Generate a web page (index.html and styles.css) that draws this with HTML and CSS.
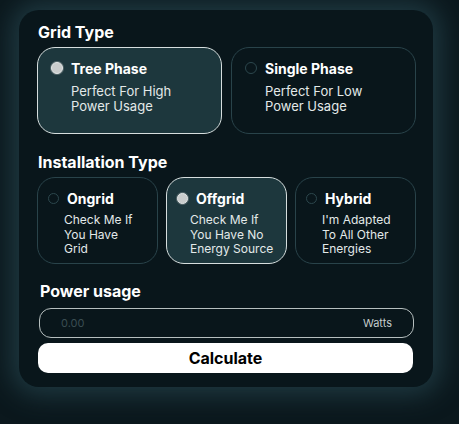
FILE: index.html
```html
<!DOCTYPE html>
<html>
<head>
<meta charset="utf-8">
<link rel="stylesheet" href="styles.css">
</head>
<body>
<div class="card">
  <h2 class="label">Grid Type</h2>
  <div class="grid-options">
    <div class="option big selected">
      <span class="radio"></span>
      <div class="text">
        <div class="title">Tree Phase</div>
        <div class="desc">Perfect For High<br>Power Usage</div>
      </div>
    </div>
    <div class="option big">
      <span class="radio"></span>
      <div class="text">
        <div class="title">Single Phase</div>
        <div class="desc">Perfect For Low<br>Power Usage</div>
      </div>
    </div>
  </div>

  <h2 class="label label-install">Installation Type</h2>
  <div class="install-options">
    <div class="option small">
      <div class="head"><span class="radio"></span><span class="title">Ongrid</span></div>
      <div class="desc">Check Me If<br>You Have<br>Grid</div>
    </div>
    <div class="option small selected">
      <div class="head"><span class="radio"></span><span class="title">Offgrid</span></div>
      <div class="desc">Check Me If<br>You Have No<br>Energy Source</div>
    </div>
    <div class="option small">
      <div class="head"><span class="radio"></span><span class="title">Hybrid</span></div>
      <div class="desc">I'm Adapted<br>To All Other<br>Energies</div>
    </div>
  </div>

  <h2 class="label label-power">Power usage</h2>
  <div class="input">
    <span class="placeholder">0.00</span>
    <span class="unit">Watts</span>
  </div>
  <button class="calc">Calculate</button>
</div>
</body>
</html>
```

FILE: styles.css
```css
* { box-sizing: border-box; }
html, body { margin: 0; padding: 0; }
body {
  width: 459px;
  height: 424px;
  background: #0b181d;
  font-family: Inter, "Noto Sans", sans-serif;
  color: #fff;
  overflow: hidden;
  padding: 10px 0 0 19px;
}
.card {
  width: 414px;
  height: 377px;
  background: #09161b;
  border-radius: 20px;
  box-shadow: 0 0 26px 8px rgba(38, 68, 77, 0.75);
  padding: 12px 17px 0 18px;
}
.label {
  margin: 0;
  font-size: 16px;
  font-weight: 700;
  line-height: 20px;
  color: #fff;
  padding-left: 1px;
}
.grid-options {
  display: grid;
  grid-template-columns: 185px 185px;
  gap: 9px;
  margin-top: 5px;
}
.option {
  border: 1px solid #29434a;
  border-radius: 18px;
  height: 87px;
}
.option.selected {
  background: #1d373d;
  border: 1.5px solid #d6dede;
}
.radio {
  display: inline-block;
  width: 12px;
  height: 12px;
  border-radius: 50%;
  border: 1px solid #2c474d;
  flex: none;
}
.selected .radio {
  background: #c9cccc;
  border: 1.5px solid #e2e6e6;
  box-shadow: 0 0 0 1px #54666a;
}
.option.big {
  display: flex;
  padding: 12px 12px 0 13px;
}
.option.big .radio { margin-top: 2px; }
.option.big .text { margin-left: 8px; }
.title {
  font-size: 14px;
  font-weight: 700;
  line-height: 17px;
  color: #fff;
}
.option.big .desc {
  margin-top: 7px;
  font-size: 13px;
  line-height: 15px;
  color: #e3e9e9;
}
.label-install { margin-top: 18px; }
.install-options {
  display: grid;
  grid-template-columns: 121px 121px 121px;
  gap: 8px;
  margin-top: 5px;
}
.option.small {
  padding: 12px 8px 0 10px;
}
.option.small .head {
  display: flex;
  align-items: center;
}
.option.small .radio { width: 11px; height: 11px; }
.option.small .title { margin-left: 8px; }
.option.small .desc {
  margin-top: 6px;
  padding-left: 16px;
  font-size: 12px;
  line-height: 14.5px;
  color: #e3e9e9;
}
.option.small.selected .desc { padding-left: 13px; }
.label-power { margin-top: 17px; padding-left: 3px; }
.input {
  margin-top: 7px;
  margin-left: 2px;
  width: 375px;
  height: 30px;
  border: 1.5px solid #b6bfbf;
  border-radius: 12px;
  display: flex;
  align-items: center;
  justify-content: space-between;
  padding: 0 21px 0 21px;
  font-size: 11px;
}
.placeholder { color: #3a4d52; }
.unit { color: #c4cccc; }
.calc {
  display: block;
  margin-top: 5px;
  margin-left: 1px;
  width: 375px;
  height: 30px;
  border: none;
  border-radius: 10px;
  background: #fff;
  color: #000;
  font-family: Inter, "Noto Sans", sans-serif;
  font-size: 16px;
  font-weight: 700;
  padding: 0;
}
```
